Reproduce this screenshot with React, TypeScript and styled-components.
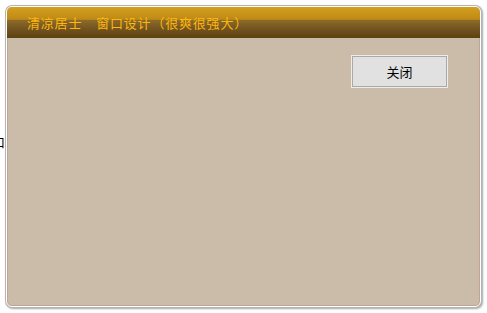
import styled, { createGlobalStyle } from "styled-components";

const GlobalStyle = createGlobalStyle`
  html, body {
    margin: 0;
    padding: 0;
    background: #ffffff;
  }
  body {
    font-family: "Noto Sans CJK SC", "DejaVu Sans", sans-serif;
  }
`;

const Page = styled.div`
  position: relative;
  width: 487px;
  height: 313px;
  padding: 6px 0 0 6px;
  box-sizing: border-box;
`;

// stray glyph peeking out from behind the window on the left edge
const Stray = styled.span`
  position: absolute;
  left: -8px;
  top: 133px;
  font-size: 13px;
  line-height: 18px;
  color: #000;
`;

const Window = styled.div`
  position: relative;
  width: 475px;
  height: 301px;
  box-sizing: border-box;
  display: flex;
  flex-direction: column;
  border: 1px solid #ffffff;
  border-radius: 6px;
  box-shadow: 0 0 0 1px #b4b4b4, 1px 1px 2px 1px rgba(0, 0, 0, 0.35);
  overflow: hidden;
  background: #cbbba9;
`;

const TitleBar = styled.div`
  height: 31px;
  flex: none;
  display: flex;
  align-items: center;
  padding-left: 20px;
  background: linear-gradient(
    to bottom,
    #d5a01c 0%,
    #bd8a19 40%,
    #8d6b27 42%,
    #735421 70%,
    #5b4111 100%
  );
`;

const Title = styled.span`
  color: #ffb70a;
  font-size: 13px;
  letter-spacing: 0.8px;
  white-space: pre;
`;

const Gap = styled.span`
  display: inline-block;
  width: 14px;
`;

const Body = styled.div`
  flex: 1;
  display: flex;
  justify-content: flex-end;
  align-items: flex-start;
  padding: 18px 32px 0 0;
  border: 1px solid #bfa595;
  border-top: none;
  border-radius: 0 0 5px 5px;
`;

const Button = styled.button`
  width: 95px;
  height: 31px;
  box-sizing: border-box;
  background: #e1e1e1;
  border: 1px solid #a9a9a9;
  box-shadow: 0 0 0 1px #f0ece6;
  font-family: "Noto Sans CJK SC", "DejaVu Sans", sans-serif;
  font-size: 13px;
  color: #000;
  padding: 0;
  cursor: pointer;
`;

export default function App() {
  return (
    <>
      <GlobalStyle />
      <Page>
        <Stray>口</Stray>
        <Window>
          <TitleBar>
            <Title>
              清凉居士<Gap />窗口设计（很爽很强大）
            </Title>
          </TitleBar>
          <Body>
            <Button>关闭</Button>
          </Body>
        </Window>
      </Page>
    </>
  );
}
